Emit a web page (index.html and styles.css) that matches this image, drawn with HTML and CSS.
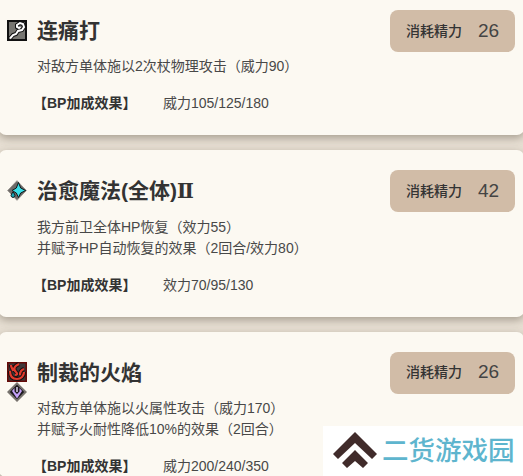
FILE: index.html
```html
<!DOCTYPE html>
<html lang="zh-CN">
<head>
<meta charset="utf-8">
<title>技能</title>
<link rel="stylesheet" href="styles.css">
</head>
<body>
<main class="list">
  <section class="card">
    <div class="icons">
      <svg width="20" height="21" viewBox="0 0 20 21"><path fill="#111" d="M0 0h20v21H0z"/><path fill="#777671" d="M2 2h16v17H2z"/><path d="M3 18.500L6 15l3-1 2-3 4-1 2-3-1-3-3-1-3 2v2l2 1 1-1" fill="none" stroke="#111" stroke-width="4"/><path d="M3 18.500L6 15l3-1 2-3 4-1 2-3-1-3-3-1-3 2v2l2 1 1.500-1" fill="none" stroke="#fff" stroke-width="2"/></svg>
    </div>
    <div class="body">
      <h2>连痛打</h2>
      <p class="desc">对敌方单体施以2次杖物理攻击（威力90）</p>
      <p class="bonus"><b>【BP加成效果】</b><span>威力105/125/180</span></p>
    </div>
    <div class="cost"><span class="label">消耗精力</span><span class="num">26</span></div>
  </section>
  <section class="card">
    <div class="icons">
      <svg width="20" height="21" viewBox="0 0 20 21"><path fill="#6d6a68" stroke="#97938e" d="M10 .7l9.300 9.800-9.300 9.800L.7 10.500z"/><path fill="#38dde6" stroke="#101719" d="M11.500 2.500l2.200 5.500 5 2.500-5 2.500-2.200 4.500-2.200-4.500-4.300-2.500 4.300-2.500z"/><path fill="#16a5b4" stroke="#101719" d="M6 12q4 4.500 0 5.500-4-1 0-5.500z"/></svg>
    </div>
    <div class="body">
      <h2>治愈魔法(全体)<span class="roman">Ⅱ</span></h2>
      <p class="desc">我方前卫全体HP恢复（效力55）<br>并赋予HP自动恢复的效果（2回合/效力80）</p>
      <p class="bonus"><b>【BP加成效果】</b><span>效力70/95/130</span></p>
    </div>
    <div class="cost"><span class="label">消耗精力</span><span class="num">42</span></div>
  </section>
  <section class="card">
    <div class="icons">
      <svg width="20" height="20" viewBox="0 0 20 20"><path fill="#40383a" stroke="#650b08" stroke-width="1.600" d="M.8.800h18.400v18.400H.8z"/><path d="M4 3c0 3 2 4 2 6M3 9c0 5 2 8 7 8 4 0 7-3 7-7M12 2c-5 2-6 5-3 8 2 2 1 3-1 3M17 7c-3 1-4 3-4 6" fill="none" stroke="#180f0f" stroke-width="4.200"/><path d="M4 3c0 3 2 4 2 6M3 9c0 5 2 8 7 8 4 0 7-3 7-7M12 2c-5 2-6 5-3 8 2 2 1 3-1 3M17 7c-3 1-4 3-4 6" fill="none" stroke="#e23b2d" stroke-width="2.200"/></svg>
      <svg width="20" height="20" viewBox="0 0 20 20"><path fill="#1b181d" stroke="#77736e" stroke-width="2" d="M10 1.400l8.600 8.600-8.600 8.600L1.400 10z"/><path fill="#c3a0f6" d="M10 16.500L5 9l2.500-3v3.500L10 12l2.500-2.500V6L15 9z"/><path fill="#ece1ff" d="M9.300 5h1.400v5H9.300z"/></svg>
    </div>
    <div class="body">
      <h2>制裁的火焰</h2>
      <p class="desc">对敌方单体施以火属性攻击（威力170）<br>并赋予火耐性降低10%的效果（2回合）</p>
      <p class="bonus"><b>【BP加成效果】</b><span>威力200/240/350</span></p>
    </div>
    <div class="cost"><span class="label">消耗精力</span><span class="num">26</span></div>
  </section>
</main>
<div class="watermark">
  <svg width="44" height="37" viewBox="0 0 44 37"><path fill="#402b2a" d="M22 0l22 22-5 5-17-16L5 27l-5-5zM22 18l13 13-5 5-8-7-8 7-5-5z"/></svg>
  <span>二货游戏园</span>
</div>
</body>
</html>
```
FILE: styles.css
```css
* { box-sizing: border-box; }
html { overflow: hidden; }
body {
  margin: 0;
  height: 476px;
  overflow: hidden;
  background: #e7dfd3;
  color: #333;
  font: 14px/21px "Liberation Sans", "Noto Sans CJK SC", sans-serif;
}
.list {
  display: flex;
  flex-direction: column;
  gap: 15px;
  margin: -10px -1px 0;
}
.card {
  display: flex;
  align-items: flex-start;
  padding: 20px 9px 21px 8px;
  border-radius: 7px;
  background: #fcf9f2;
  box-shadow: 0 3px 8px rgba(70, 60, 45, .4);
}
.card:last-child { padding-bottom: 0; }
.icons {
  display: flex;
  flex-direction: column;
  width: 30px;
  padding-top: 10px;
}
.icons svg { display: block; }
.body { flex: 1; white-space: nowrap; }
h2 {
  margin: 0;
  font-size: 21px;
  line-height: 42px;
  height: 42px;
  font-weight: bold;
}
.roman {
  font-family: "DejaVu Serif", serif;
  font-size: 20px;
  line-height: 1;
}
p { margin: 0; }
.desc { padding-top: 4.4px; color: #484848; }
.bonus {
  display: flex;
  margin: 16px 0 0 -4px;
}
.bonus b { width: 130px; }
.bonus span { color: #484848; }
.cost {
  display: flex;
  align-items: center;
  width: 125px;
  height: 42px;
  padding-left: 16px;
  border-radius: 8px;
  background: #d1bca7;
}
.label { width: 72px; font-weight: 500; }
.num { font-size: 19px; line-height: 21px; padding-bottom: 2px; color: #444; }
.watermark {
  position: absolute;
  right: 0;
  bottom: 0;
  display: flex;
  width: 200px;
  height: 50px;
  padding: 6px 0 0 10px;
  background: #fff;
  color: #5eb5ce;
}
.watermark span {
  margin-left: 5px;
  font: 500 26.5px/33px "Noto Sans CJK SC", sans-serif;
  white-space: nowrap;
}
```
